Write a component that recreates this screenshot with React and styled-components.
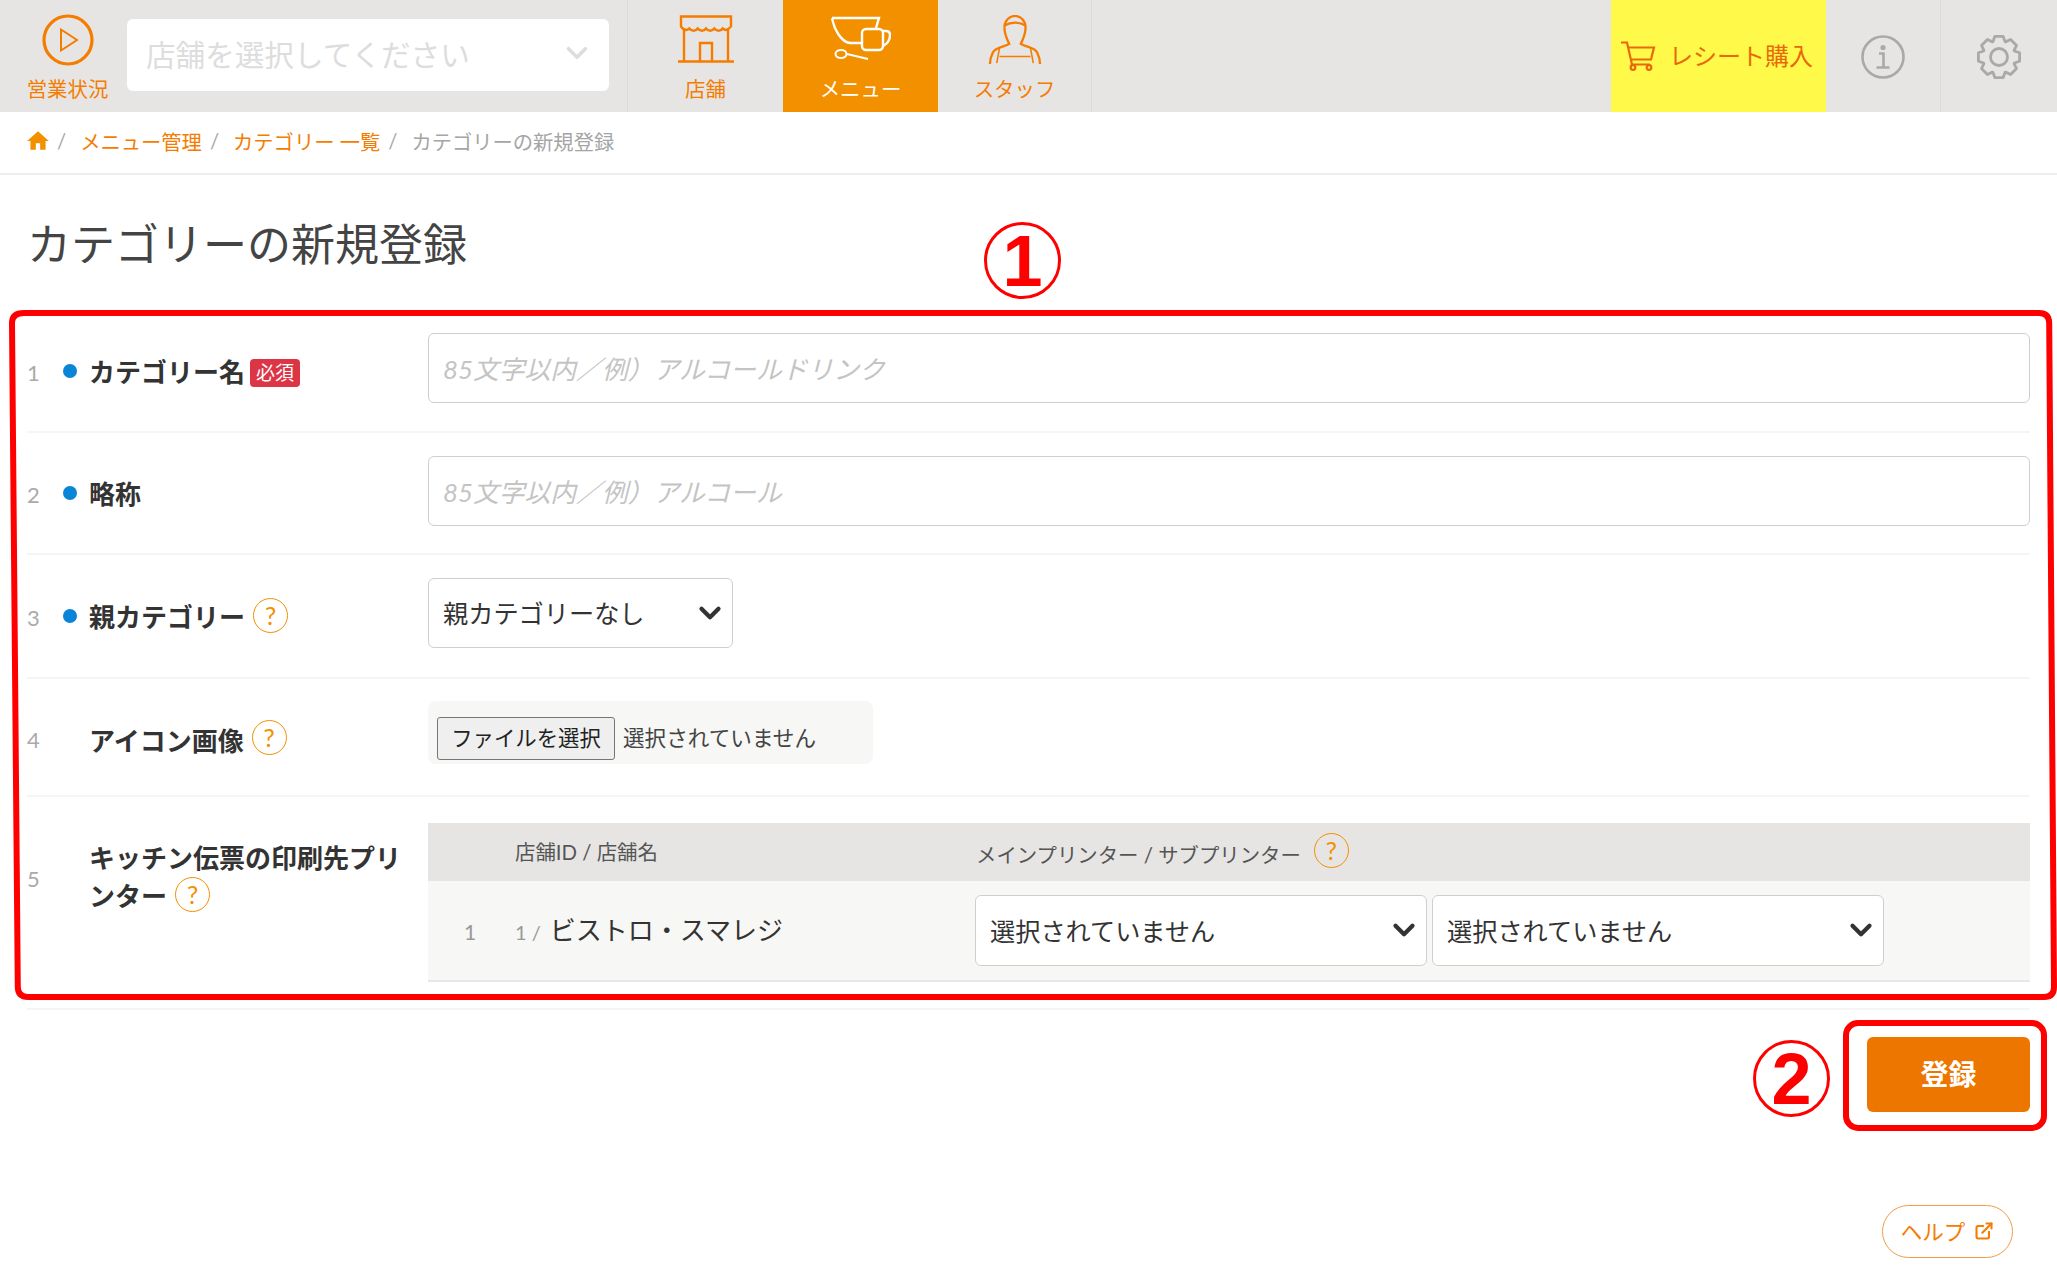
import React from "react";
import styled, { createGlobalStyle } from "styled-components";
import { ChevronDown, ExternalLink } from "lucide-react";
import { MdHome } from "react-icons/md";

const GlobalStyle = createGlobalStyle`
  html, body {
    margin: 0;
    background: #fff;
    font-family: Lato, "Noto Sans CJK JP", sans-serif;
    color: #333;
  }
  * {
    box-sizing: border-box;
  }
`;

const orange = "#f57c00";

const Page = styled.div`
  position: relative;
  width: 2057px;
  height: 1272px;
  overflow: hidden;
`;

const Header = styled.header`
  display: flex;
  height: 112px;
  background: #e6e5e3;
`;

const StatusBlock = styled.div`
  width: 127px;
  flex: none;
  display: flex;
  flex-direction: column;
  align-items: center;
  padding-top: 14px;
  padding-left: 8px;
  color: ${orange};
  font-size: 20.4px;
  line-height: 24px;
  gap: 11px;
`;

const StoreSelectWrap = styled.div`
  width: 501px;
  flex: none;
  padding: 19px 18px 21px 0;
  border-right: 1px solid #dcdbd9;
`;

const StoreSelect = styled.div`
  height: 72px;
  background: #fff;
  border-radius: 6px;
  display: flex;
  align-items: center;
  justify-content: space-between;
  padding: 0 15px 4px 19px;
  font-size: 29.6px;
  color: #ddd;
`;

const NavItem = styled.div`
  width: ${(p) => p.$w || 155}px;
  flex: none;
  display: flex;
  flex-direction: column;
  align-items: center;
  justify-content: flex-end;
  padding-bottom: 11px;
  gap: ${(p) => p.$gap}px;
  font-size: 20.4px;
  line-height: 24px;
  color: ${(p) => (p.$active ? "#fff" : orange)};
  background: ${(p) => (p.$active ? "#f39000" : "transparent")};
  border-right: ${(p) => (p.$border ? "1px solid #dcdbd9" : "none")};
`;

const Spacer = styled.div`
  flex: 1;
`;

const ReceiptBuy = styled.div`
  width: 215px;
  flex: none;
  display: flex;
  align-items: center;
  gap: 13px;
  padding-left: 10px;
  background: #fff94a;
  color: #e8690a;
  font-size: 24px;
  white-space: nowrap;
`;

const ReceiptLabel = styled.span`
  padding-bottom: 4px;
`;

const HeaderIcon = styled.div`
  width: ${(p) => p.$w}px;
  flex: none;
  display: flex;
  align-items: center;
  justify-content: center;
  padding-top: 1px;
  border-right: ${(p) => (p.$border ? "1px solid #dcdbd9" : "none")};
`;

const Breadcrumb = styled.nav`
  height: 63px;
  display: flex;
  align-items: center;
  padding: 0 27px 3px;
  border-bottom: 2px solid #eeeeee;
  font-size: 20.3px;
  color: #a5a5a5;
`;

const HomeIcon = styled(MdHome)`
  margin: 0 -2px;
`;

const Crumb = styled.span`
  color: ${orange};
`;

const Slash = styled.span`
  margin: 0 14px 0 8px;
  color: #aaa;
`;

const Title = styled.h1`
  margin: 0;
  padding: 39px 27px 37px;
  font-size: 44px;
  line-height: 60px;
  font-weight: 400;
  color: #444;
`;

const Form = styled.form`
  position: relative;
  padding: 0 27px;
`;

const Row = styled.div`
  display: grid;
  grid-template-columns: 36px 26px 339px 1fr;
  align-items: center;
  height: ${(p) => p.$h}px;
  border-bottom: 2px solid #f5f5f4;
`;

const RowNum = styled.span`
  font-size: 22px;
  color: #aaa;
  padding-top: ${(p) => p.$pt ?? 3}px;
  padding-bottom: ${(p) => p.$pb ?? 0}px;
`;

const Dot = styled.span`
  width: 14px;
  height: 14px;
  border-radius: 50%;
  background: #0a84d6;
`;

const Label = styled.div`
  grid-column: 3;
  padding-right: 26px;
  padding-top: ${(p) => p.$pt ?? 2}px;
  padding-bottom: ${(p) => p.$pb ?? 0}px;
  font-size: 26px;
  line-height: 37px;
  font-weight: 700;
  color: #333;
`;

const Required = styled.span`
  display: inline-block;
  margin-left: 5px;
  padding: 0 6px;
  height: 28px;
  line-height: 27px;
  vertical-align: 2px;
  border-radius: 4px;
  background: #dc3545;
  color: #fff;
  font-size: 19px;
  font-weight: 400;
`;

const Help = styled.span`
  display: inline-flex;
  align-items: center;
  justify-content: center;
  width: 35px;
  height: 35px;
  margin-left: ${(p) => p.$ml ?? 8}px;
  border: 1.5px solid #f39000;
  border-radius: 50%;
  color: #f39000;
  font-size: 25px;
  font-weight: 400;
  line-height: 1;
  vertical-align: ${(p) => p.$va ?? 2}px;
`;

const Field = styled.div`
  grid-column: 4;
  padding-bottom: ${(p) => p.$pb ?? 0}px;
`;

const TextInput = styled.input`
  display: block;
  width: 100%;
  height: 70px;
  padding: 2px 14px 0;
  border: 1.5px solid #cfcfcf;
  border-radius: 6px;
  background: #fff;
  font-family: inherit;
  font-size: 25.8px;
  &::placeholder {
    color: #c4c4c4;
    font-style: italic;
  }
`;

const SelectWrap = styled.div`
  position: relative;
  width: ${(p) => p.$w}px;
  height: ${(p) => p.$h ?? 70}px;
  flex: none;
  svg {
    position: absolute;
    right: 6px;
    top: 18px;
    pointer-events: none;
  }
`;

const Select = styled.select`
  appearance: none;
  display: block;
  width: 100%;
  height: 100%;
  padding: 0 14px;
  border: 1.5px solid #cfcfcf;
  border-radius: 6px;
  background: #fff;
  color: #333;
  font-family: inherit;
  font-size: 25.2px;
`;

const FileBox = styled.div`
  display: flex;
  align-items: center;
  gap: 8px;
  width: 445px;
  height: 63px;
  padding: 12px 9px 0;
  border-radius: 8px;
  background: #f7f7f5;
  font-size: 21.6px;
  color: #444;
`;

const FileButton = styled.button`
  width: 178px;
  height: 43px;
  padding: 0 0 3px;
  border: 1px solid #767676;
  border-radius: 3px;
  background: #efefef;
  color: #222;
  font-family: inherit;
  font-size: 21.4px;
  white-space: nowrap;
`;

const FileStatus = styled.span`
  padding-bottom: 4px;
`;

const PrinterTable = styled.div`
  display: flex;
  flex-direction: column;
  font-size: 20.4px;
`;

const TableHead = styled.div`
  display: grid;
  grid-template-columns: 87px 461px 1fr;
  align-items: center;
  height: 58px;
  padding-bottom: 2px;
  background: #e6e5e3;
  color: #555;
`;

const TableBody = styled.div`
  display: grid;
  grid-template-columns: 87px 460px 1fr;
  align-items: center;
  height: 101px;
  background: #f7f7f5;
  border-bottom: 2px solid #e8e8e6;
`;

const Cell = styled.div`
  grid-column: ${(p) => p.$col};
`;

const ShopCell = styled.div`
  padding-bottom: 5px;
`;

const PrinterCell = styled(Cell)`
  display: flex;
  gap: 5px;
`;

const RowIndex = styled.span`
  display: block;
  padding-left: 36px;
  padding-top: 1px;
  font-size: 21px;
  color: #999;
`;

const ShopId = styled.span`
  color: #999;
  font-size: 20px;
`;

const ShopName = styled.span`
  margin-left: 9px;
  font-size: 26px;
  color: #333;
`;

const Submit = styled.div`
  display: flex;
  justify-content: flex-end;
  padding: 27px 27px 0;
`;

const SubmitButton = styled.button`
  width: 163px;
  height: 75px;
  padding: 0 0 3px;
  border: none;
  border-radius: 6px;
  background: #ed7600;
  color: #fff;
  font-family: inherit;
  font-size: 28px;
  font-weight: 700;
`;

const HelpBar = styled.div`
  display: flex;
  justify-content: flex-end;
  padding: 93px 44px 0;
`;

const HelpLink = styled.a`
  display: flex;
  align-items: center;
  justify-content: center;
  gap: 9px;
  width: 131px;
  height: 53px;
  padding-bottom: 2px;
  border: 1.5px solid #f39a4a;
  border-radius: 27px;
  color: ${orange};
  font-size: 21.5px;
`;

const RedFrame = styled.svg`
  position: absolute;
  left: 0;
  top: 0;
  pointer-events: none;
`;

const Mark = styled.span`
  position: absolute;
  left: ${(p) => p.$x}px;
  top: ${(p) => p.$y}px;
  width: 77px;
  height: 77px;
  display: flex;
  align-items: center;
  justify-content: center;
  border: 3.5px solid #f00;
  border-radius: 50%;
  color: #f00;
  font-family: "Liberation Sans", sans-serif;
  font-size: 72px;
  line-height: 1;
  font-weight: 700;
`;

const PlayIcon = () => (
  <svg width="52" height="52" viewBox="0 0 52 52" fill="none" stroke={orange}>
    <circle cx="26" cy="26" r="24" strokeWidth="3.2" />
    <path d="M19 15.5v21L35 26z" strokeWidth="2" />
  </svg>
);

const StoreIcon = () => (
  <svg width="56" height="48" viewBox="0 0 56 48" fill="none" stroke={orange} strokeWidth="2.4">
    <path d="M3 1.5h50v10c-3 3-5 5-8.3 2-2 3-6 3-8.400 0-2 3-6 3-8.300 0-2 3-6 3-8.300 0-2 3-6 3-8.400 0C8 16.500 5 14.500 3 11.500z" />
    <path d="M6 13v34M50 13v34M0 46.500h56" />
    <path d="M22 46V28h12v18" />
  </svg>
);

const CupIcon = () => (
  <svg width="60" height="46" viewBox="0 0 60 46" fill="none" stroke="#fff" strokeWidth="2.4">
    <path d="M1 2h47l-3 10M1 2c2 11 9 24 18 25h11" />
    <rect x="31" y="13" width="21" height="21" rx="4" />
    <path d="M52 15h3c3 0 4 2 4 4 0 5-3 9-7 11" />
    <ellipse cx="10" cy="38" rx="5.500" ry="4" strokeWidth="2" />
    <path d="M16 38l21 5" strokeWidth="2" />
  </svg>
);

const StaffIcon = () => (
  <svg width="56" height="52" viewBox="0 0 56 54" fill="none" stroke={orange} strokeWidth="2.4">
    <path d="M17 13c0-7 5-12 11-12s11 5 11 12c0 7-3 13-5 17 4 3 14 3 17 9 2 4 3 8 3 12" />
    <path d="M17 13c0 7 3 13 5 17-4 3-14 3-17 9-2 4-3 8-3 12" />
    <path d="M17 11c7-4 15-4 22 0" />
    <path d="M12 34l-3 16M44 34l3 16M12 43h32" strokeWidth="1.600" />
  </svg>
);

const CartIcon = () => (
  <svg width="35" height="30" viewBox="0 0 35 30" fill="none" stroke="#e8690a" strokeWidth="2.2">
    <path d="M0 1.500h6l5 22h18" />
    <path d="M7 6.500h26l-3 12H10" />
    <circle cx="12" cy="26.500" r="2.300" />
    <circle cx="28" cy="26.500" r="2.300" />
  </svg>
);

const InfoIcon = () => (
  <svg width="44" height="44" viewBox="0 0 44 44" fill="none" stroke="#a9a9a9" strokeWidth="2.6">
    <circle cx="22" cy="22" r="20.500" />
    <circle cx="22" cy="12.500" r="1.300" fill="#a9a9a9" />
    <path d="M18 18.500h4.500v14M15.500 32.500h13" />
  </svg>
);

// 8枚歯の歯車
const gearPath = (() => {
  const teeth = 8;
  const pts = [];
  for (let i = 0; i < teeth; i++) {
    const a = (i * Math.PI * 2) / teeth - Math.PI / 2;
    const step = (Math.PI * 2) / teeth;
    [
      [16.5, -0.5],
      [21, -0.27],
      [21, 0.27],
      [16.5, 0.5],
    ].forEach(([r, k]) => {
      const t = a + k * step * 0.95;
      pts.push(`${(23 + r * Math.cos(t)).toFixed(2)} ${(23 + r * Math.sin(t)).toFixed(2)}`);
    });
  }
  return `M${pts.join("L")}Z`;
})();

const GearIcon = () => (
  <svg width="46" height="46" viewBox="0 0 46 46" fill="none" stroke="#a9a9a9" strokeWidth="2.8" strokeLinejoin="round">
    <path d={gearPath} />
    <circle cx="23" cy="23" r="8.500" />
  </svg>
);

const App = () => {
  return (
    <Page>
      <GlobalStyle />
      <Header>
        <StatusBlock>
          <PlayIcon />
          <span>営業状況</span>
        </StatusBlock>
        <StoreSelectWrap>
          <StoreSelect>
            <span>店舗を選択してください</span>
            <ChevronDown size={34} color="#dddddd" strokeWidth={2.5} />
          </StoreSelect>
        </StoreSelectWrap>
        <NavItem $gap={14}>
          <StoreIcon />
          <span>店舗</span>
        </NavItem>
        <NavItem $active $gap={15}>
          <CupIcon />
          <span>メニュー</span>
        </NavItem>
        <NavItem $border $w={154} $gap={10}>
          <StaffIcon />
          <span>スタッフ</span>
        </NavItem>
        <Spacer />
        <ReceiptBuy>
          <CartIcon />
          <ReceiptLabel>レシート購入</ReceiptLabel>
        </ReceiptBuy>
        <HeaderIcon $w={115} $border>
          <InfoIcon />
        </HeaderIcon>
        <HeaderIcon $w={116}>
          <GearIcon />
        </HeaderIcon>
      </Header>

      <Breadcrumb>
        <HomeIcon size={26} color="#f39000" />
        <Slash>/</Slash>
        <Crumb>メニュー管理</Crumb>
        <Slash>/</Slash>
        <Crumb>カテゴリー 一覧</Crumb>
        <Slash>/</Slash>
        <span>カテゴリーの新規登録</span>
      </Breadcrumb>

      <Title>カテゴリーの新規登録</Title>

      <Form>
        <Row $h={122}>
          <RowNum>1</RowNum>
          <Dot />
          <Label>
            カテゴリー名<Required>必須</Required>
          </Label>
          <Field $pb={6}>
            <TextInput placeholder="85文字以内／例）アルコールドリンク" />
          </Field>
        </Row>
        <Row $h={122}>
          <RowNum>2</RowNum>
          <Dot />
          <Label>略称</Label>
          <Field $pb={4}>
            <TextInput placeholder="85文字以内／例）アルコール" />
          </Field>
        </Row>
        <Row $h={124}>
          <RowNum>3</RowNum>
          <Dot />
          <Label>
            親カテゴリー<Help>?</Help>
          </Label>
          <Field $pb={6}>
            <SelectWrap $w={305}>
              <Select defaultValue="none">
                <option value="none">親カテゴリーなし</option>
              </Select>
              <ChevronDown size={34} color="#333" strokeWidth={3} />
            </SelectWrap>
          </Field>
        </Row>
        <Row $h={118}>
          <RowNum $pt={5}>4</RowNum>
          <Label $pt={5}>
            アイコン画像<Help $va={4}>?</Help>
          </Label>
          <Field $pb={10}>
            <FileBox>
              <FileButton type="button">ファイルを選択</FileButton>
              <FileStatus>選択されていません</FileStatus>
            </FileBox>
          </Field>
        </Row>
        <Row $h={213}>
          <RowNum $pb={52}>5</RowNum>
          <Label $pb={52}>
            キッチン伝票の印刷先プリンター<Help>?</Help>
          </Label>
          <Field>
            <PrinterTable>
              <TableHead>
                <Cell $col={2}>店舗ID / 店舗名</Cell>
                <Cell $col={3}>
                  メインプリンター / サブプリンター<Help $ml={13} $va={3}>?</Help>
                </Cell>
              </TableHead>
              <TableBody>
                <RowIndex>1</RowIndex>
                <ShopCell>
                  <ShopId>1 /</ShopId>
                  <ShopName>ビストロ・スマレジ</ShopName>
                </ShopCell>
                <PrinterCell $col={3}>
                  <SelectWrap $w={452} $h={71}>
                    <Select defaultValue="none">
                      <option value="none">選択されていません</option>
                    </Select>
                    <ChevronDown size={34} color="#333" strokeWidth={3} />
                  </SelectWrap>
                  <SelectWrap $w={452} $h={71}>
                    <Select defaultValue="none">
                      <option value="none">選択されていません</option>
                    </Select>
                    <ChevronDown size={34} color="#333" strokeWidth={3} />
                  </SelectWrap>
                </PrinterCell>
              </TableBody>
            </PrinterTable>
          </Field>
        </Row>
      </Form>

      <Submit>
        <SubmitButton type="button">登録</SubmitButton>
      </Submit>

      <HelpBar>
        <HelpLink>
          ヘルプ
          <ExternalLink size={20} color={orange} strokeWidth={2.5} />
        </HelpLink>
      </HelpBar>

      {/* 赤枠の注釈 */}
      <RedFrame width="2057" height="1272" fill="none" stroke="#ff0000" strokeWidth="6">
        <path d="M24 313H2039Q2049 313 2049.200 323L2054 987Q2054 997 2044 997H28Q18 997 17.800 987L12 323Q12 313 24 313Z" />
        <rect x="1846" y="1023" width="198" height="105" rx="12" />
      </RedFrame>
      <Mark $x={984} $y={222}>1</Mark>
      <Mark $x={1753} $y={1040}>2</Mark>
    </Page>
  );
};

export default App;
